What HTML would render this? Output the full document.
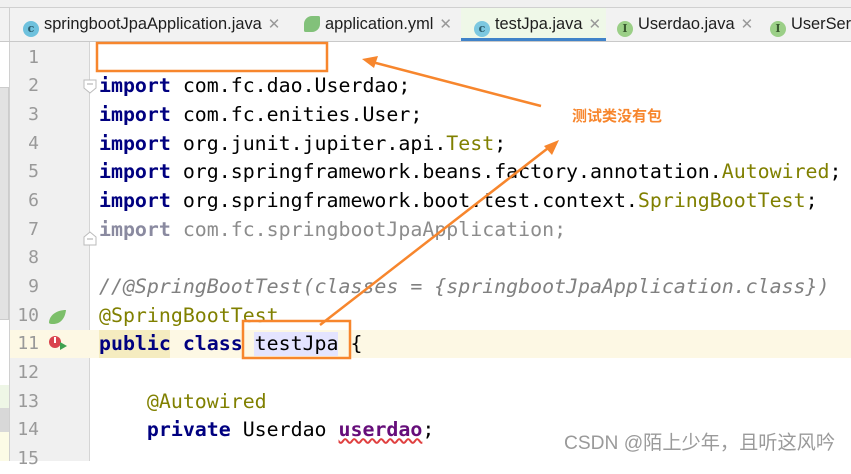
<!DOCTYPE html>
<html><head><meta charset="utf-8"><style>
body{margin:0;width:851px;height:461px;overflow:hidden;background:#fff;position:relative;font-family:"Liberation Sans",sans-serif}
.a{position:absolute}
.tab{position:absolute;top:8px;height:33px;line-height:33px;font-size:16.4px;color:#1e1e1e;white-space:nowrap}
.x{color:#999;margin-left:6px;font-size:15px}
.ic{display:inline-block;width:16px;height:16px;border-radius:50%;vertical-align:-3px;margin-right:5px;text-align:center;line-height:16px;font-size:11px;font-family:"DejaVu Serif",serif;font-weight:bold}
.ln{position:absolute;left:10px;width:29px;text-align:right;font-family:"DejaVu Sans Mono",monospace;font-size:18px;color:#999;height:28.67px;line-height:28.67px}
.cd{position:absolute;left:99px;font-family:"DejaVu Sans Mono",monospace;font-size:19.9px;height:28.67px;line-height:28.67px;white-space:pre;color:#000}
.k{color:#000080;font-weight:bold}.an{color:#808000}.g{color:#8c8c8c}.cm{color:#808080;font-style:italic}
</style></head><body>
<div class="a" style="left:0;top:0;width:851px;height:7px;background:#f0f0f0;border-bottom:1px solid #d0d0d0"></div>
<div class="a" style="left:0;top:8px;width:851px;height:33px;background:#f2f2f2;border-bottom:1px solid #c9c9c9"></div>
<div class="a" style="left:9px;top:8px;width:1px;height:33px;background:#d0d0d0"></div>
<div class="a" style="left:461px;top:8px;width:145px;height:30px;background:#eff8e8;border-bottom:3px solid #4083c9"></div>
<div class="tab" style="left:23px"><span class="ic" style="background:#6ec1dd;color:#2a5a6a">c</span>springbootJpaApplication.java<span class="x">✕</span></div>
<div class="tab" style="left:304px"><span class="ic" style="background:#82c17a;border-radius:50% 10%"></span>application.yml<span class="x">✕</span></div>
<div class="tab" style="left:474px"><span class="ic" style="background:#7cc8e0;color:#2a5a6a">c</span>testJpa.java<span class="x">✕</span></div>
<div class="tab" style="left:617px"><span class="ic" style="background:#9bcf87;color:#3a5a30">I</span>Userdao.java<span class="x">✕</span></div>
<div class="tab" style="left:770px"><span class="ic" style="background:#9bcf87;color:#3a5a30">I</span>UserServ</div>
<div class="a" style="left:0;top:87px;width:8px;height:231px;background:#e2e2e2;border:1px solid #ccc;border-left:none"></div>
<div class="a" style="left:0;top:385px;width:9px;height:23px;background:#eef6e6"></div>
<div class="a" style="left:0;top:408px;width:9px;height:24px;background:#d8d8d8"></div>
<div class="a" style="left:0;top:432px;width:9px;height:29px;background:#fcfbe6"></div>
<div class="a" style="left:9px;top:42px;width:1px;height:419px;background:#d0d0d0"></div>
<div class="a" style="left:10px;top:42px;width:79px;height:419px;background:#f0f0f0"></div>
<div class="a" style="left:89px;top:42px;width:1px;height:419px;background:#d5d5d5"></div>
<div class="a" style="left:10px;top:330px;width:841px;height:28px;background:#fdf8e4"></div>
<div class="a" style="left:99px;top:330px;width:71px;height:28px;background:#f5ecc0"></div>
<div class="a" style="left:254px;top:332px;width:84px;height:24px;background:#e4e4ff"></div>
<div class="ln" style="top:43.7px">1</div><div class="ln" style="top:72.4px">2</div><div class="ln" style="top:101px">3</div><div class="ln" style="top:129.7px">4</div><div class="ln" style="top:158.4px">5</div><div class="ln" style="top:187px">6</div><div class="ln" style="top:215.7px">7</div><div class="ln" style="top:244.4px">8</div><div class="ln" style="top:273.1px">9</div><div class="ln" style="top:301.7px">10</div><div class="ln" style="top:330.4px">11</div><div class="ln" style="top:359.1px">12</div><div class="ln" style="top:387.7px">13</div><div class="ln" style="top:416.4px">14</div><div class="ln" style="top:445.1px">15</div>
<svg class="a" style="left:0;top:0" width="851" height="461">
<path d="M84 80h12v8l-6 5l-6-5z" fill="#fff" stroke="#bbb"/><path d="M87 84h6" stroke="#aaa"/>
<path d="M84 237l6-5l6 5v8h-12z" fill="#fff" stroke="#bbb"/><path d="M87 239h6" stroke="#aaa"/>
<path d="M49 323c0-8 8-13 17-13c-1 9-6 14-13 14c-2 0-3 0-4-1z" fill="#7cbf6a"/>
<circle cx="55" cy="342" r="6" fill="#d9434d"/><rect x="54" y="337" width="2" height="6" fill="#fff"/><path d="M60 342l7 4l-7 4z" fill="#3ea150"/>
</svg>
<div class="cd" style="top:72.4px"><span class="k">import</span> com.fc.dao.Userdao;</div>
<div class="cd" style="top:101px"><span class="k">import</span> com.fc.enities.User;</div>
<div class="cd" style="top:129.7px"><span class="k">import</span> org.junit.jupiter.api.<span class="an">Test</span>;</div>
<div class="cd" style="top:158.4px"><span class="k">import</span> org.springframework.beans.factory.annotation.<span class="an">Autowired</span>;</div>
<div class="cd" style="top:187px"><span class="k">import</span> org.springframework.boot.test.context.<span class="an">SpringBootTest</span>;</div>
<div class="cd g" style="top:215.7px"><span style="font-weight:bold;color:#8a8aa0">import</span> com.fc.springbootJpaApplication;</div>
<div class="cd cm" style="top:273.1px">//@SpringBootTest(classes = {springbootJpaApplication.class})</div>
<div class="cd an" style="top:301.7px">@SpringBootTest</div>
<div class="cd" style="top:330.4px"><span class="k">public class</span> testJpa {</div>
<div class="cd an" style="top:387.7px">    @Autowired</div>
<div class="cd" style="top:416.4px">    <span class="k">private</span> Userdao <span style="color:#660e7a;font-weight:bold;text-decoration:underline wavy #e04040">userdao</span>;</div>
<svg class="a" style="left:0;top:0" width="851" height="461">
<rect x="97" y="43" width="230" height="28" fill="none" stroke="#f7862d" stroke-width="2.5"/>
<rect x="243" y="321" width="107" height="37" fill="none" stroke="#f7862d" stroke-width="2.5"/>
<path d="M541 106L372 62" stroke="#f7862d" stroke-width="2.5"/><path d="M362 59l16-3l-4 12z" fill="#f7862d"/>
<path d="M320 325L552 145" stroke="#f7862d" stroke-width="2.5"/><path d="M559 140l-7 15l-8-9z" fill="#f7862d"/>
</svg>
<div class="a" style="left:572px;top:105px;font-size:15px;font-weight:bold;color:#f7862d;font-family:'Liberation Sans','Noto Sans CJK SC',sans-serif">测试类没有包</div>
<div class="a" style="left:564px;top:427px;font-size:19.2px;color:#9a9a9a;font-family:'Liberation Sans','Noto Sans CJK SC',sans-serif">CSDN @陌上少年，且听这风吟</div>
</body></html>
